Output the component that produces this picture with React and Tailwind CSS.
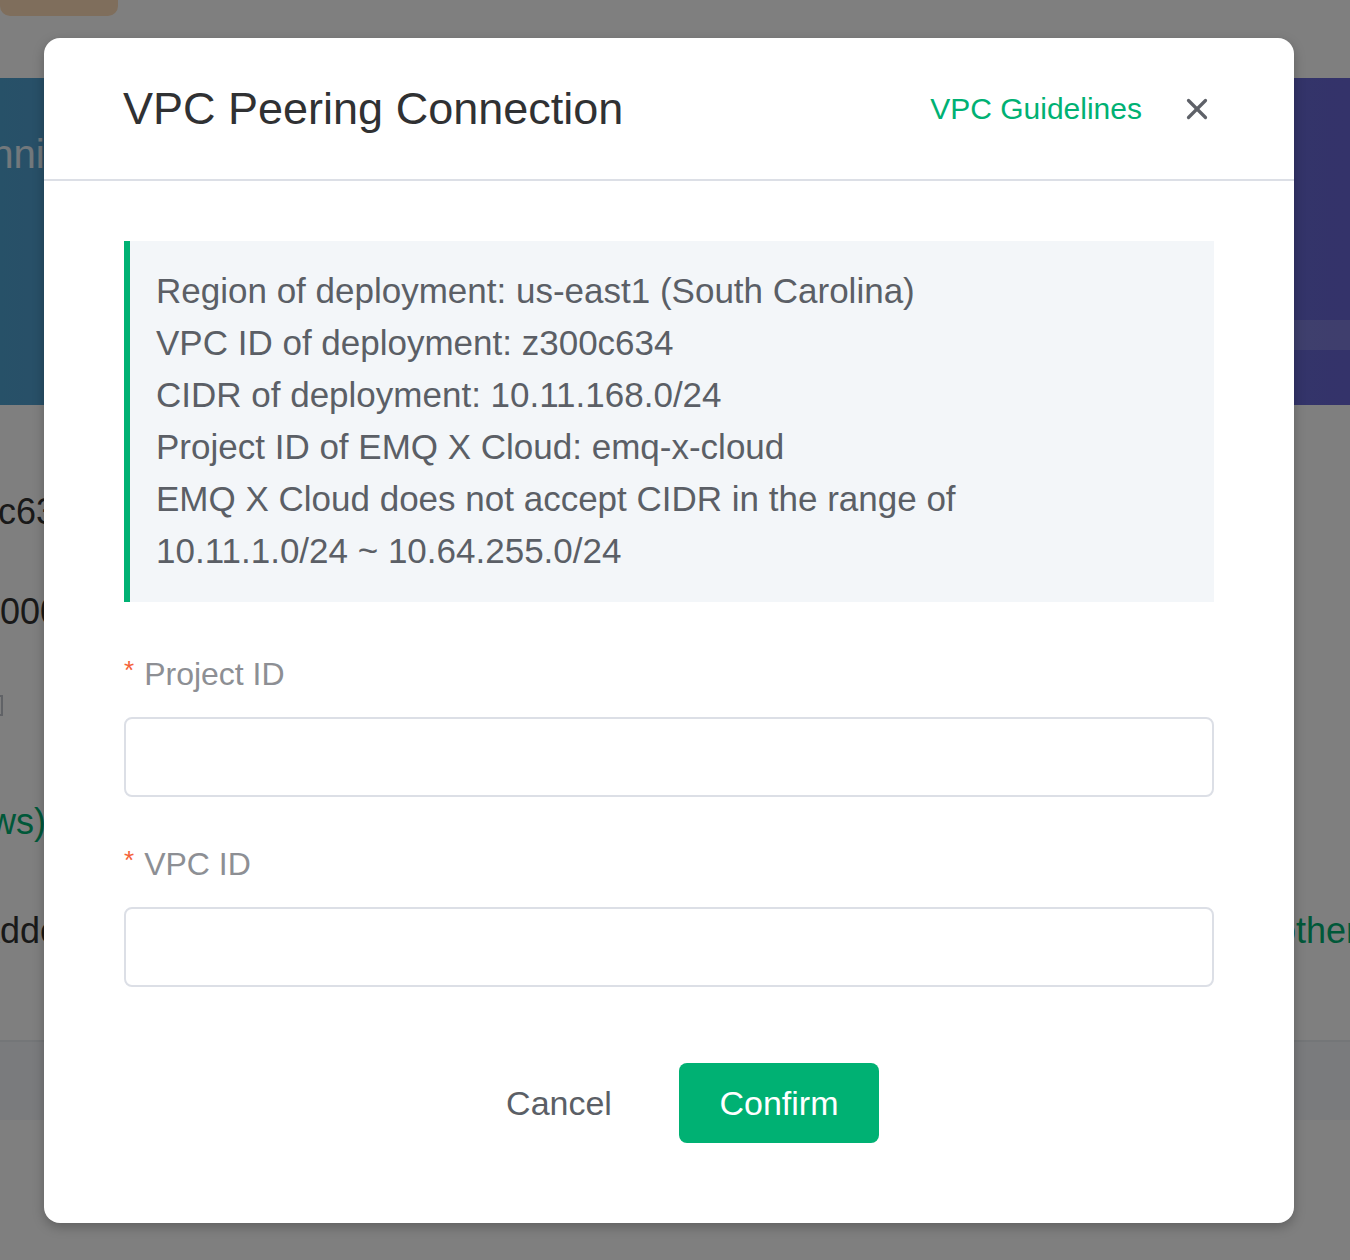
import { X } from 'lucide-react';

function Field({ label }) {
  return (
    <div className="flex flex-col">
      <label className="flex h-[44px] items-center text-[32px] text-[#8d8f94]">
        <span className="mr-[10px] -mt-[8px] text-[26px] text-[#f4623a]">*</span>
        {label}
      </label>
      <input
        type="text"
        className="mt-[21px] h-[80px] w-full rounded-[8px] border-2 border-[#dcdfe6] bg-white px-[24px] text-[32px] text-[#606266] outline-none"
      />
    </div>
  );
}

export default function App() {
  const info = [
    'Region of deployment: us-east1 (South Carolina)',
    'VPC ID of deployment: z300c634',
    'CIDR of deployment: 10.11.168.0/24',
    'Project ID of EMQ X Cloud: emq-x-cloud',
    'EMQ X Cloud does not accept CIDR in the range of',
    '10.11.1.0/24 ~ 10.64.255.0/24',
  ];

  return (
    <div className="relative h-[1260px] w-[1350px] overflow-hidden bg-white font-['Liberation_Sans',Arial,sans-serif]">
      {/* page behind the dialog */}
      <div className="h-[78px]">
        <div className="h-[16px] w-[118px] rounded-b-[10px] bg-[#ffdcb8]" />
      </div>
      <div className="flex h-[327px] flex-col bg-gradient-to-r from-[#4fa2d0] to-[#6866d4] pt-[52px]">
        <div className="-ml-[60px] text-[40px] leading-[48px] text-white/85">Running</div>
        <div className="ml-auto mt-[142px] h-[30px] w-[400px] bg-white/15" />
      </div>
      <div className="flex h-[635px] flex-col pt-[82px] text-[36px] text-[#333]">
        <div className="-ml-[80px] h-[50px] leading-[50px]">z300c634</div>
        <div className="-ml-[20px] mt-[50px] h-[50px] leading-[50px]">10000</div>
        <div className="-ml-[21px] mt-[58px] h-[21px] w-[24px] border-2 border-[#c0c4cc]" />
        <div className="-ml-[42px] mt-[81px] h-[50px] leading-[50px] text-[#00b173]">(aws)</div>
        <div className="mt-[59px] flex h-[50px] justify-between leading-[50px]">
          <span className="-ml-[24px]">Added</span>
          <span className="-mr-[8px] text-[#00b173]">other</span>
        </div>
      </div>
      <div className="h-[80px] border-t-2 border-[#e8ecf0] bg-[#f4f6fa]" />

      {/* overlay + dialog */}
      <div className="absolute inset-0 flex bg-black/50 pl-[44px] pt-[38px]">
        <div className="flex h-[1185px] w-[1250px] flex-col rounded-[16px] bg-white shadow-[0_4px_12px_rgba(0,0,0,0.25)]">
          <div className="flex h-[143px] shrink-0 items-center border-b-2 border-[#dcdfe6] pl-[79px] pr-[80px]">
            <h2 className="text-[45px] leading-none text-[#303133]">VPC Peering Connection</h2>
            <a className="ml-auto text-[30px] text-[#00b173]">VPC Guidelines</a>
            <button className="ml-[38px] flex h-[34px] w-[34px] items-center justify-center text-[#5e6168]">
              <X size={38} strokeWidth={2.3} />
            </button>
          </div>

          <div className="flex flex-1 flex-col px-[80px] pt-[60px]">
            <div className="border-l-[6px] border-[#00b173] bg-[#f3f6f9] pb-[25px] pl-[26px] pt-[24px]">
              {info.map((line) => (
                <p key={line} className="text-[35px] leading-[52px] text-[#5b5f66]">
                  {line}
                </p>
              ))}
            </div>

            <div className="mt-[50px]">
              <Field label="Project ID" />
            </div>
            <div className="mt-[45px]">
              <Field label="VPC ID" />
            </div>

            <div className="mt-[76px] flex justify-center gap-[20px]">
              <button className="h-[80px] w-[200px] rounded-[8px] text-[34px] text-[#5b5f66]">Cancel</button>
              <button className="h-[80px] w-[200px] rounded-[8px] bg-[#00b173] text-[34px] text-white">Confirm</button>
            </div>
          </div>
        </div>
      </div>
    </div>
  );
}
